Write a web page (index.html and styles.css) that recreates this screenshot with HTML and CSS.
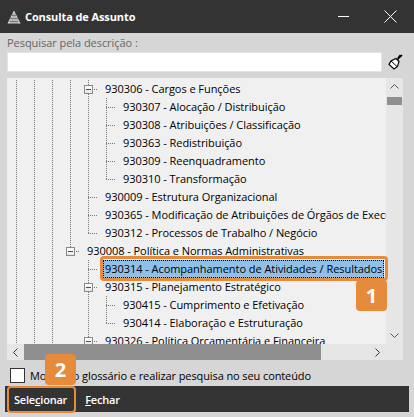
FILE: index.html
```html
<!DOCTYPE html>
<html lang="pt-BR">
<head>
<meta charset="utf-8">
<title>Consulta de Assunto</title>
<link rel="stylesheet" href="styles.css">
</head>
<body>
<div class="window">
  <header class="titlebar">
    <svg class="logo" width="14" height="14" viewBox="0 0 14 14"><path d="M7 0.500L13.500 13.500H0.500Z" fill="#e0e0e0"/><path d="M5 5.500H9M3.500 8.500H10.500M2 11.500H12M6 3V13.500M8 3V13.500M4 7V13.500M10 7V13.500" stroke="#555" stroke-width="0.600"/></svg>
    <span class="title">Consulta de Assunto</span>
    <svg class="win-min" width="11" height="1" viewBox="0 0 11 1"><rect width="11" height="1" fill="#fff"/></svg>
    <svg class="win-close" width="13" height="13" viewBox="0 0 13 13"><path d="M0.500 0.500L12.500 12.500M12.500 0.500L0.500 12.500" stroke="#fff" stroke-width="1"/></svg>
  </header>
  <div class="label">Pesquisar pela descrição :</div>
  <div class="search">
    <div class="input"></div>
    <svg class="broom" width="15" height="16" viewBox="0 0 15 16"><path d="M14 1L9.500 5.500M12.500 1L10 4" stroke="#000" stroke-width="1.600" fill="none"/><path d="M8 4.500L11 7.500L9.500 12.500L6 15L1 10.500L3 7Z" fill="#fff" stroke="#000" stroke-width="1.200"/><path d="M3 7L9 12.500" stroke="#000" stroke-width="1"/></svg>
  </div>
  <div class="treebox">
    <div class="tree">
      <div class="row"><i class="g"></i><i class="g"></i><i class="g"></i><i class="g"></i><i class="c tee"><b class="exp"></b></i><span class="t">930306 - Cargos e Funções</span></div>
      <div class="row"><i class="g"></i><i class="g"></i><i class="g"></i><i class="g"></i><i class="g"></i><i class="c tee"></i><span class="t">930307 - Alocação / Distribuição</span></div>
      <div class="row"><i class="g"></i><i class="g"></i><i class="g"></i><i class="g"></i><i class="g"></i><i class="c tee"></i><span class="t">930308 - Atribuições / Classificação</span></div>
      <div class="row"><i class="g"></i><i class="g"></i><i class="g"></i><i class="g"></i><i class="g"></i><i class="c tee"></i><span class="t">930363 - Redistribuição</span></div>
      <div class="row"><i class="g"></i><i class="g"></i><i class="g"></i><i class="g"></i><i class="g"></i><i class="c tee"></i><span class="t">930309 - Reenquadramento</span></div>
      <div class="row"><i class="g"></i><i class="g"></i><i class="g"></i><i class="g"></i><i class="g"></i><i class="c elbow"></i><span class="t">930310 - Transformação</span></div>
      <div class="row"><i class="g"></i><i class="g"></i><i class="g"></i><i class="g"></i><i class="c tee"></i><span class="t">930009 - Estrutura Organizacional</span></div>
      <div class="row"><i class="g"></i><i class="g"></i><i class="g"></i><i class="g"></i><i class="c tee"></i><span class="t">930365 - Modificação de Atribuições de Órgãos de Execução</span></div>
      <div class="row"><i class="g"></i><i class="g"></i><i class="g"></i><i class="g"></i><i class="c elbow"></i><span class="t">930312 - Processos de Trabalho / Negócio</span></div>
      <div class="row"><i class="g"></i><i class="g"></i><i class="g"></i><i class="c elbow"><b class="exp"></b></i><span class="t">930008 - Política e Normas Administrativas</span></div>
      <div class="row"><i class="g"></i><i class="g"></i><i class="g"></i><i class="n"></i><i class="c tee"></i><span class="t sel">930314 - Acompanhamento de Atividades / Resultados</span></div>
      <div class="row"><i class="g"></i><i class="g"></i><i class="g"></i><i class="n"></i><i class="c tee"><b class="exp"></b></i><span class="t">930315 - Planejamento Estratégico</span></div>
      <div class="row"><i class="g"></i><i class="g"></i><i class="g"></i><i class="n"></i><i class="g"></i><i class="c tee"></i><span class="t">930415 - Cumprimento e Efetivação</span></div>
      <div class="row"><i class="g"></i><i class="g"></i><i class="g"></i><i class="n"></i><i class="g"></i><i class="c elbow"></i><span class="t">930414 - Elaboração e Estruturação</span></div>
      <div class="row"><i class="g"></i><i class="g"></i><i class="g"></i><i class="n"></i><i class="c tee"><b class="exp"></b></i><span class="t">930326 - Política Orçamentária e Financeira</span></div>
    </div>
    <div class="vbar">
      <svg class="arrow" width="9" height="5" viewBox="0 0 9 5"><path d="M0.500 4.500L4.500 0.500L8.500 4.500" fill="none" stroke="#555"/></svg>
      <div class="vthumb"></div>
      <svg class="arrow down" width="9" height="5" viewBox="0 0 9 5"><path d="M0.500 0.500L4.500 4.500L8.500 0.500" fill="none" stroke="#555"/></svg>
    </div>
    <div class="hbar">
      <div class="hbtn"><svg width="5" height="9" viewBox="0 0 5 9"><path d="M4.500 0.500L0.500 4.500L4.500 8.500" fill="none" stroke="#333"/></svg></div>
      <div class="hthumb"></div>
      <div class="hbtn end"><svg width="5" height="9" viewBox="0 0 5 9"><path d="M0.500 0.500L4.500 4.500L0.500 8.500" fill="none" stroke="#333"/></svg></div>
    </div>
    <div class="corner"></div>
  </div>
  <label class="check"><span class="box"></span><span class="check-text">Mostrar o glossário e realizar pesquisa no seu conteúdo</span></label>
  <footer class="footer">
    <span class="btn">Sele<u>c</u>ionar</span>
    <span class="btn"><u>F</u>echar</span>
  </footer>
</div>
<div class="hl hl-row"></div>
<div class="hl hl-btn"></div>
<div class="badge badge-1">1</div>
<div class="badge badge-2">2</div>
</body>
</html>
```
FILE: styles.css
```css
* { box-sizing: border-box; }
html, body { margin: 0; height: 100%; }
body { position: relative; background: #d6d6d6; font-family: "Open Sans", "Noto Sans", sans-serif; font-size: 11px; letter-spacing: -0.05px; color: #000; overflow: hidden; }
.window { display: flex; flex-direction: column; height: 417px; width: 414px; }
.titlebar { display: flex; align-items: center; height: 33px; background: #333; color: #fff; padding: 0 17px 0 7px; flex: none; }
.logo { margin-right: 4px; }
.title { font-weight: 700; font-size: 11px; flex: 1; letter-spacing: -0.1px; }
.win-min { margin-right: 35px; }
.label { height: 19px; padding: 2px 0 0 7px; color: #666; line-height: 16px; flex: none; }
.search { display: flex; align-items: center; height: 20px; padding-left: 7px; flex: none; }
.input { width: 375px; height: 20px; background: #fff; border: 1px solid #e4e4e4; }
.broom { margin-left: 6px; }
.treebox { display: grid; grid-template-columns: 379px 17px; grid-template-rows: 266px 16px; margin: 6px 0 0 7px; width: 396px; flex: none; }
.tree { background: #f0f0f0; overflow: hidden; padding-top: 2px; }
.row { display: flex; height: 18px; white-space: nowrap; align-items: stretch; }
.row i { display: block; flex: none; width: 18px; position: relative; }
.g { background: repeating-linear-gradient(to bottom, #777 0 1px, transparent 1px 2px) no-repeat 9px 0 / 1px 100%; }
.n { background: none; }
.tee { background: repeating-linear-gradient(to bottom, #777 0 1px, transparent 1px 2px) no-repeat 9px 0 / 1px 100%, repeating-linear-gradient(to right, #777 0 1px, transparent 1px 2px) no-repeat 9px 9px / 9px 1px; }
.elbow { background: repeating-linear-gradient(to bottom, #777 0 1px, transparent 1px 2px) no-repeat 9px 0 / 1px 10px, repeating-linear-gradient(to right, #777 0 1px, transparent 1px 2px) no-repeat 9px 9px / 9px 1px; }
.exp { position: absolute; left: 5px; top: 5px; width: 9px; height: 9px; background: linear-gradient(#fff, #e6e6e6); border: 1px solid #8a8a8a; }
.exp::after { content: ""; position: absolute; left: 1px; top: 3px; width: 5px; height: 1px; background: #2b4f9e; }
.t { display: block; line-height: 17px; margin-left: 6px; padding: 0 2px; }
.sel { background: #90c0e8; outline: 1px dotted #000; outline-offset: -1px; }
.vbar { background: #e6e6e6; position: relative; display: flex; flex-direction: column; align-items: center; padding-top: 6px; }
.vthumb { width: 15px; height: 8px; background: #8f8f8f; margin-top: 8px; }
.arrow { flex: none; }
.down { margin-top: auto; margin-bottom: 6px; }
.hbar { display: flex; background: #e6e6e6; }
.hbtn { width: 17px; flex: none; display: flex; align-items: center; justify-content: center; }
.hthumb { width: 297px; background: #8f8f8f; }
.end { margin-left: auto; }
.corner { background: #e6e6e6; }
.check { display: flex; align-items: center; height: 15px; margin: 8px 0 0 10px; flex: none; gap: 5px; }
.check-text { letter-spacing: -0.1px; line-height: 14px; }
.box { width: 15px; height: 15px; background: #fff; border: 1px solid #333; flex: none; }
.footer { display: flex; align-items: center; gap: 18px; height: 26px; margin: 3px 5px 0; padding-left: 9px; background: #333; color: #fff; font-weight: 600; letter-spacing: -0.2px; flex: none; }
.hl { position: absolute; border: 3px solid #e68a3c; border-radius: 4px; }
.hl-row { left: 100px; top: 256px; width: 288px; height: 25px; }
.hl-btn { left: 7px; top: 386px; width: 69px; height: 27px; border-width: 2px; }
.badge { position: absolute; width: 31px; height: 31px; background: #e68a3c; color: #fff; border-radius: 4px; font-weight: 700; font-size: 20px; display: flex; align-items: center; justify-content: center; }
.badge-1 { left: 356px; top: 280px; }
.badge-2 { left: 45px; top: 354px; }
```
